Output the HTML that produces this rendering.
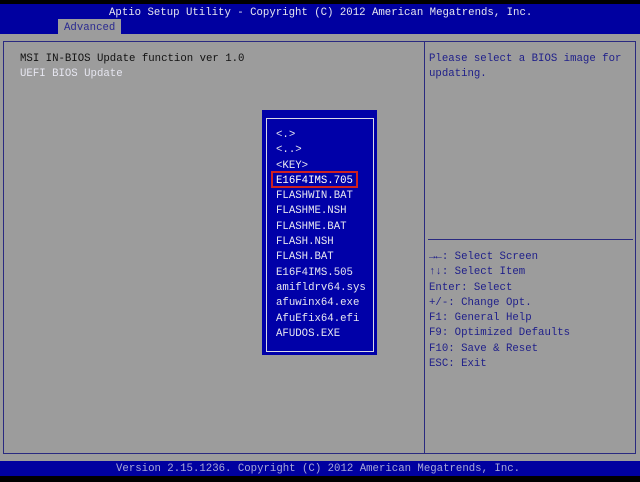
<!DOCTYPE html>
<html><head><meta charset="utf-8"><style>
*{margin:0;padding:0;box-sizing:border-box}
body{width:640px;height:482px;background:#000;position:relative;overflow:hidden;font-family:"Liberation Mono","DejaVu Sans Mono",monospace;font-size:10.7px;line-height:15px}
.a{position:absolute;white-space:pre}
#top{left:0;top:4px;width:640px;height:31px;background:#0000a0}
#gray{left:0;top:34px;width:640px;height:427px;background:#9c9c9c}
#bot{left:0;top:461px;width:640px;height:15px;background:#0000a0}
.w{color:#e6e6f0}
.d{color:#20208a}
</style></head><body>
<div class="a" id="top"></div>
<div class="a" id="gray"></div>
<div class="a" id="bot"></div>
<div class="a w" style="left:109px;top:6px">Aptio Setup Utility - Copyright (C) 2012 American Megatrends, Inc.</div>
<div class="a" style="left:58px;top:19px;width:63px;height:16px;background:#9c9c9c"></div>
<div class="a d" style="left:64px;top:21px;color:#2a2a90">Advanced</div>
<div class="a" style="left:3px;top:41px;width:633px;height:413px;border:1px solid #2a2a80"></div>
<div class="a" style="left:424px;top:41px;width:1px;height:413px;background:#2a2a80"></div>
<div class="a" style="left:428px;top:239px;width:205px;height:1px;background:#2a2a80"></div>
<div class="a" style="left:20px;top:52px;color:#111">MSI IN-BIOS Update function ver 1.0</div>
<div class="a w" style="left:20px;top:67px">UEFI BIOS Update</div>
<div class="a d" style="left:429px;top:52px">Please select a BIOS image for
updating.</div>
<div class="a d" style="left:429px;top:250px;line-height:15.3px">→←: Select Screen
↑↓: Select Item
Enter: Select
+/-: Change Opt.
F1: General Help
F9: Optimized Defaults
F10: Save &amp; Reset
ESC: Exit</div>
<div class="a" style="left:262px;top:110px;width:115px;height:245px;background:#0000a8"></div>
<div class="a" style="left:266px;top:118px;width:108px;height:234px;border:1px solid #d8d8e8"></div>
<div class="a" style="left:271px;top:171px;width:87px;height:17px;border:2px solid #d02020"></div>
<div class="a w" style="left:276px;top:128px;line-height:15.3px">&lt;.&gt;
&lt;..&gt;
&lt;KEY&gt;
<span style="color:#fff">E16F4IMS.705</span>
FLASHWIN.BAT
FLASHME.NSH
FLASHME.BAT
FLASH.NSH
FLASH.BAT
E16F4IMS.505
amifldrv64.sys
afuwinx64.exe
AfuEfix64.efi
AFUDOS.EXE</div>
<div class="a" style="left:116px;top:462px;color:#a8a8d8">Version 2.15.1236. Copyright (C) 2012 American Megatrends, Inc.</div>
</body></html>
